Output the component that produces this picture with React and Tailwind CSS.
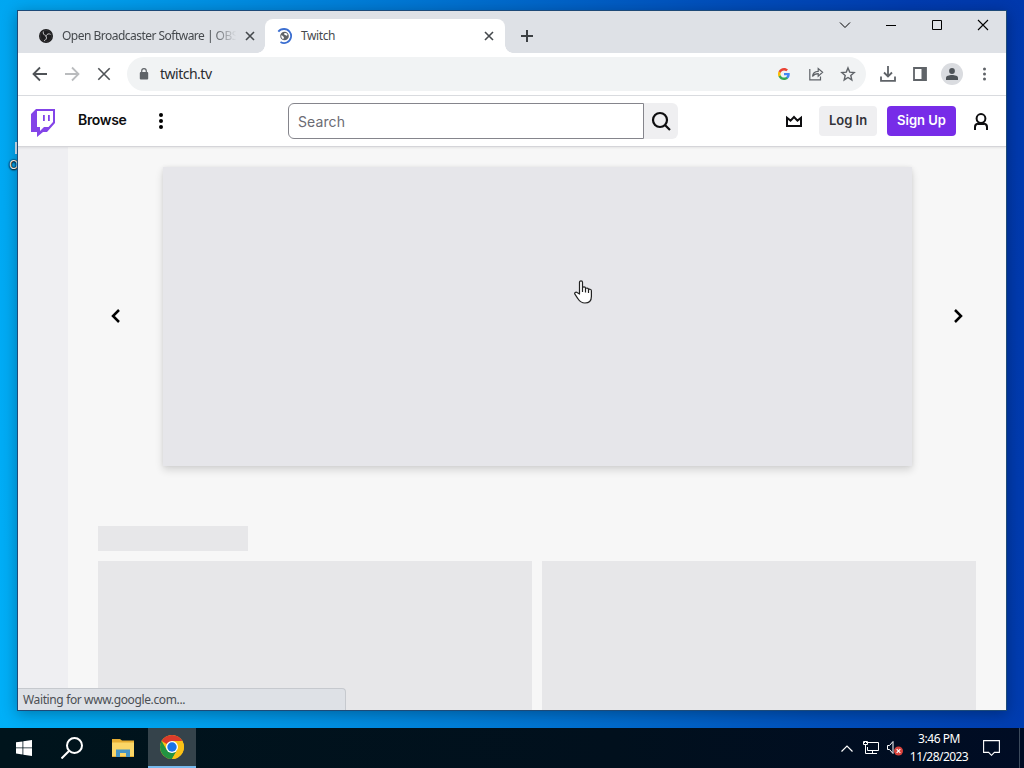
import React from 'react';

const UI_FONT = "font-['Noto_Sans','Open_Sans',sans-serif]";

const CloseIcon = ({ size = 10, className = '' }) => (
  <svg width={size} height={size} viewBox="0 0 10 10" className={className} fill="none" stroke="currentColor" strokeWidth="1.6">
    <path d="M1 1l8 8M9 1L1 9" />
  </svg>
);

const ObsIcon = () => (
  <svg width="14" height="14" viewBox="0 0 14 14">
    <circle cx="7" cy="7" r="7" fill="#1d1d1f" />
    <circle cx="7" cy="7" r="5.6" fill="none" stroke="#3c3c3e" strokeWidth=".6" />
    <path d="M4.400 2.500c-.6 2 .3 3.600 2.400 4M11.600 5.400C9.900 4.300 8 4.900 7.300 6.700M5 11.600c1.900-.4 2.900-2 2.300-4.100" fill="none" stroke="#c4c4c6" strokeWidth="1" />
    <circle cx="7" cy="7" r="1" fill="#9a9a9c" />
  </svg>
);

const LoadingIcon = () => (
  <svg width="16" height="16" viewBox="0 0 16 16" fill="none">
    <path d="M1.300 3.600C2.500 2 4.500 1 7 1a7 7 0 1 1-3.500 13" stroke="#3c6fd1" strokeWidth="1.800" />
    <circle cx="7.500" cy="8" r="4.300" fill="#5f6368" />
    <path d="M4.300 7.200c1.500-.2 1.300 1.300 2.400 1.500.6.700-.3 1.700-.2 2.500-1.500-.4-2.500-2-2.200-4zM7.300 5.200c.8-.6 2.300-.3 3 .8.300.8.200 1.200-.4 1.700-.8.200-1.100-.5-1.900-.6-.7-.4-1.100-1.100-.7-1.900z" fill="#fff" />
  </svg>
);

const TabStrip = () => (
  <div className="flex h-[42px] shrink-0 bg-[#dee1e6] text-[#45494d]">
    <div className="mt-2 flex w-[247px] items-center pl-[21px]">
      <ObsIcon />
      <span className="ml-[9px] w-[178px] whitespace-nowrap text-[12px] tracking-[-0.52px] [mask-image:linear-gradient(to_right,#000_84%,transparent_98%)]">
        Open Broadcaster Software | OBS
      </span>
      <CloseIcon className="ml-[5px]" />
    </div>
    <div className="relative mt-2 flex w-[240px] items-center rounded-t-lg bg-white pl-3">
      <span className="absolute bottom-0 -left-2 size-2 bg-[radial-gradient(circle_at_0_0,transparent_7.5px,#fff_8px)]" />
      <span className="absolute bottom-0 -right-2 size-2 bg-[radial-gradient(circle_at_100%_0,transparent_7.5px,#fff_8px)]" />
      <LoadingIcon />
      <span className="ml-2 flex-1 text-[12px] tracking-[-0.4px]">Twitch</span>
      <CloseIcon className="mr-[11px]" />
    </div>
    <svg className="mt-[19px] ml-4" width="12" height="12" viewBox="0 0 12 12" stroke="#3c4043" strokeWidth="2">
      <path d="M6 0v12M0 6h12" />
    </svg>
    <div className="ml-auto flex h-7 items-center text-black">
      <svg width="46" height="28" viewBox="0 0 46 28" fill="none" stroke="currentColor">
        <path d="M18 11.500l5 5 5-5" />
      </svg>
      <svg width="46" height="28" viewBox="0 0 46 28" fill="none" stroke="currentColor">
        <path d="M18 14.500h10" />
      </svg>
      <svg width="46" height="28" viewBox="0 0 46 28" fill="none" stroke="currentColor">
        <path d="M18.500 9.500h9v9h-9z" />
      </svg>
      <svg width="46" height="28" viewBox="0 0 46 28" fill="none" stroke="currentColor">
        <path d="M18 9l10 10M28 9L18 19" strokeWidth="1.100" />
      </svg>
    </div>
  </div>
);

const Toolbar = () => (
  <div className="flex h-[43px] shrink-0 items-center border-b border-[#dadce0] bg-white text-[#5f6368]">
    <svg className="ml-[14px]" width="16" height="16" viewBox="0 0 16 16" fill="none" stroke="#4f5357" strokeWidth="1.800">
      <path d="M15 8H2M8 1.500L1.500 8 8 14.500" />
    </svg>
    <svg className="ml-4" width="16" height="16" viewBox="0 0 16 16" fill="none" stroke="#babcbe" strokeWidth="1.800">
      <path d="M1 8h13M8 1.500L14.500 8 8 14.500" />
    </svg>
    <svg className="ml-4" width="16" height="16" viewBox="0 0 16 16" fill="none" stroke="#4f5357" strokeWidth="1.600">
      <path d="M2.300 2.300l11.400 11.400M13.700 2.300L2.300 13.700" />
    </svg>
    <div className="ml-[15px] flex h-[34px] w-[739px] items-center rounded-full bg-[#f1f3f4]">
      <svg className="ml-3" width="10" height="12" viewBox="0 0 10 12">
        <rect x=".8" y="4" width="8.400" height="7.500" rx="1" fill="#5f6368" />
        <path d="M2.700 4.500V3a2.300 2.300 0 0 1 4.600 0v1.500" fill="none" stroke="#5f6368" strokeWidth="1.200" />
      </svg>
      <span className="ml-[11px] -mt-px text-[14px] tracking-[-0.5px] text-[#2b2d30]">twitch.tv</span>
      <svg className="ml-auto" width="12" height="12" viewBox="0 0 48 48">
        <path fill="#4285F4" d="M47 24.500c0-1.600-.2-3.200-.4-4.700H24v9h12.900c-.6 3-2.300 5.500-4.800 7.200v6h7.700c4.600-4.200 7.200-10.400 7.200-17.500z" />
        <path fill="#34A853" d="M24 48c6.500 0 12-2.100 15.800-5.900l-7.700-6c-2.100 1.400-4.800 2.300-8.100 2.300-6.300 0-11.600-4.200-13.500-9.900H2.600v6.200C6.500 42.600 14.600 48 24 48z" />
        <path fill="#FBBC05" d="M10.500 28.500a14.500 14.500 0 0 1 0-9.100v-6.200H2.600a24 24 0 0 0 0 21.500z" />
        <path fill="#EA4335" d="M24 9.500c3.500 0 6.700 1.200 9.200 3.600l6.800-6.800C35.900 2.400 30.500 0 24 0 14.600 0 6.500 5.400 2.600 13.200l7.900 6.200C12.400 13.700 17.700 9.500 24 9.500z" />
      </svg>
      <svg className="ml-[18px]" width="16" height="16" viewBox="0 0 16 16" fill="none" stroke="currentColor" strokeWidth="1.200">
        <path d="M1.800 3v10.800h10.700v-3.300" />
        <path d="M4.500 10.500c.3-3.500 2.300-5.100 5.700-5.200V2.500L14.600 6.300l-4.400 3.800V7.700c-2.600 0-4.400.8-5.700 2.800z" />
      </svg>
      <svg className="ml-4 mr-[10px]" width="16" height="16" viewBox="0 0 16 16" fill="none" stroke="currentColor" strokeWidth="1.400">
        <path d="M8 1.900l1.700 4.200 4.500.4-3.400 3 1 4.400L8 11.500l-3.800 2.400 1-4.400-3.400-3 4.500-.4z" />
      </svg>
    </div>
    <svg className="ml-[14px]" width="16" height="16" viewBox="0 0 16 16" fill="none" stroke="currentColor" strokeWidth="1.800">
      <path d="M8 0v10M4 6.500l4 4 4-4M1 10.500v4.300h14v-4.300" />
    </svg>
    <svg className="ml-4" width="16" height="16" viewBox="0 0 16 16">
      <path d="M2 2h12v12H2z" fill="none" stroke="currentColor" strokeWidth="1.800" />
      <path d="M9.500 2H14v12H9.500z" fill="currentColor" />
    </svg>
    <div className="ml-[13px] flex size-[22px] items-center justify-center rounded-full bg-[#dadce0]">
      <svg width="12" height="12" viewBox="0 0 12 12" fill="#4e5358">
        <circle cx="6" cy="3" r="2.900" />
        <path d="M0 12V9.800C0 7.900 3 7 6 7s6 .9 6 2.800V12z" />
      </svg>
    </div>
    <svg className="ml-[19px]" width="4" height="14" viewBox="0 0 4 14" fill="currentColor">
      <circle cx="2.500" cy="2" r="1.500" />
      <circle cx="2.500" cy="7" r="1.500" />
      <circle cx="2.500" cy="12" r="1.500" />
    </svg>
  </div>
);

const TwitchNav = () => (
  <header className="relative z-10 flex h-[51px] shrink-0 items-center border-b border-[#d5d5d9] bg-white font-['Inter',sans-serif] text-[#0e0e10] shadow-[0_1px_2px_rgba(0,0,0,0.08)]">
    <svg className="ml-[13px] mt-1" width="24" height="28" viewBox="0 0 24 28">
      <path fill="#fff" d="M6 2h16v12l-5 5h-4l-4 4v-4H6z" />
      <path fill="#8344e8" d="M5 0L0 5v18h6v5l6-5h4l8-9V0zm17 13l-4.500 5H13l-4 4v-4H6V2h16z" />
      <path fill="#8344e8" d="M12 6h1.800v6H12zM17 6h1.800v6H17z" />
    </svg>
    <span className="ml-[23px] w-12 -mt-[3px] text-[14px] font-semibold tracking-[-0.35px]">Browse</span>
    <svg className="ml-[33px]" width="4" height="16" viewBox="0 0 4 16">
      <circle cx="2" cy="2" r="2" />
      <circle cx="2" cy="8" r="2" />
      <circle cx="2" cy="14" r="2" />
    </svg>
    <div className="ml-[125px] flex h-9">
      <div className="flex w-[356px] items-center rounded-l-[6px] border border-[#85858c] bg-white pl-[9px] text-[14px] tracking-[0.1px] text-[#6b6b73]">
        Search
      </div>
      <div className="flex w-[34px] items-center justify-center rounded-r-[6px] bg-[#efeff1]">
        <svg width="20" height="20" viewBox="0 0 20 20" fill="none" stroke="currentColor" strokeWidth="2.200">
          <circle cx="9" cy="9" r="7" />
          <path d="M14 14l5 5" />
        </svg>
      </div>
    </div>
    <svg className="ml-auto" width="18" height="12" viewBox="0 0 18 12" fill="none" stroke="currentColor" strokeWidth="2">
      <path d="M2 10.900V2.800l3.500 2.800L9 2l3.500 3.600L16 2.800v8.100z" />
    </svg>
    <button className="ml-4 h-[30px] w-[58px] rounded bg-[#efeff1] text-[13px] font-semibold text-[#323238]">Log In</button>
    <button className="ml-[10px] h-[30px] w-[69px] rounded bg-[#772ce8] text-[13px] font-semibold text-white">Sign Up</button>
    <svg className="ml-[18px] mr-[18px]" width="14" height="17" viewBox="0 0 14 17" fill="none" stroke="currentColor" strokeWidth="2">
      <circle cx="7" cy="5.500" r="4.400" />
      <path d="M1 17v-3c0-2 1-3 3-3.500L5 9.700M13 17v-3c0-2-1-3-3-3.500L9 9.700M4 11h6" />
    </svg>
  </header>
);

const Carousel = () => (
  <div className="flex items-center">
    <svg className="mx-[43px] mb-[2px]" width="9" height="14" viewBox="0 0 9 14" fill="none" stroke="#000" strokeWidth="2.500">
      <path d="M8 1L2 7l6 6" />
    </svg>
    <div className="h-[299px] w-[749px] bg-[#e6e6ea] shadow-[0_4px_8px_rgba(0,0,0,0.14),0_0_4px_rgba(0,0,0,0.06)]" />
    <svg className="ml-[42px] mb-[2px]" width="9" height="14" viewBox="0 0 9 14" fill="none" stroke="#000" strokeWidth="2.500">
      <path d="M1 1l6 6-6 6" />
    </svg>
  </div>
);

const BrowserWindow = () => (
  <div className={`absolute left-[17px] top-[10px] flex h-[701px] w-[990px] flex-col overflow-hidden border border-[#1d4a78] shadow-[0_3px_14px_rgba(0,0,0,0.3)] ${UI_FONT}`}>
    <TabStrip />
    <Toolbar />
    <TwitchNav />
    <div className="flex min-h-0 flex-1">
      <aside className="w-[50px] shrink-0 bg-[#efeff2]" />
      <main className="flex-1 overflow-hidden bg-[#f7f7f7] pt-5">
        <Carousel />
        <div className="ml-[30px] mt-[60px] h-[25px] w-[150px] bg-[#e7e7e9]" />
        <div className="ml-[30px] mt-[10px] flex gap-[10px]">
          <div className="h-[180px] w-[434px] bg-[#e7e7e9]" />
          <div className="h-[180px] w-[434px] bg-[#e7e7e9]" />
        </div>
      </main>
    </div>
    <div className="absolute bottom-0 left-0 flex h-[22px] w-[328px] items-center rounded-tr border-r border-t border-[#c6c9ce] bg-[#dee1e6] pl-[5px] text-[12px] tracking-[-0.37px] text-[#4b4f54]">
      Waiting for www.google.com...
    </div>
  </div>
);

const ChromeIcon = () => (
  <svg width="24" height="24" viewBox="0 0 24 24">
    <circle cx="12" cy="12" r="12" fill="#fbc116" />
    <path d="M12 12L1.610 6A12 12 0 0 1 22.390 6z" fill="#db3b2b" />
    <path d="M1.610 6A12 12 0 0 0 12 24l5.200-9L12 12 6.800 15z" fill="#229342" />
    <path d="M12 6h10.390A12 12 0 0 1 12 24l5.200-9z" fill="#fbc116" />
    <circle cx="12" cy="12" r="6" fill="#fff" />
    <circle cx="12" cy="12" r="4.700" fill="#1a73e8" />
  </svg>
);

const Taskbar = () => (
  <footer className={`flex h-10 items-center bg-[linear-gradient(to_right,#00141c,#01101d_60%,#000c24)] text-white ${UI_FONT}`}>
    <svg className="ml-4" width="16" height="16" viewBox="0 0 16 16" fill="currentColor">
      <path d="M0 2.300l6.500-.9v6.100H0zM7.300 1.200L16 0v7.500H7.300zM0 8.300h6.500v6.200L0 13.600zM7.300 8.300H16V16l-8.700-1.200z" />
    </svg>
    <svg className="ml-[29px]" width="22" height="22" viewBox="0 0 22 22" fill="none" stroke="currentColor" strokeWidth="2">
      <circle cx="13.500" cy="8.500" r="7.500" />
      <path d="M8 14l-7.500 7.500" />
    </svg>
    <svg className="ml-[29px]" width="22" height="18" viewBox="0 0 22 18">
      <path d="M0 0h8l2 1.500h12V18H0z" fill="#e6ad33" />
      <path d="M0 3.500h22V17H0z" fill="#fbd667" />
      <path d="M4 18V10.500h14V18h-4v-4H8v4z" fill="#4694c4" />
    </svg>
    <div className="ml-[14px] flex h-10 w-12 items-center justify-center border-b-2 border-[#76b9ed] bg-[#35434b]">
      <ChromeIcon />
    </div>
    <svg className="ml-auto" width="12" height="7" viewBox="0 0 12 7" fill="none" stroke="currentColor" strokeWidth="1.200">
      <path d="M.5 6.500L6 1l5.500 5.500" />
    </svg>
    <svg className="ml-[10px]" width="16" height="14" viewBox="0 0 16 14" fill="none" stroke="currentColor">
      <path d="M5 1.500h10.500v8H4.500V6M9.500 9.500v3M5 12.500h9" />
      <path d="M.5.500h4v3h-4zM2.500 3.500v9H5M1.500.500v1.500M3.500.500v1.500" />
    </svg>
    <svg className="ml-2" width="17" height="16" viewBox="0 0 17 16">
      <path d="M.5 5.500h2l3.500-4v12l-3.500-4h-2z" fill="none" stroke="#fff" />
      <circle cx="11.500" cy="11" r="4.500" fill="#d9433c" />
      <path d="M9.700 9.200l3.600 3.600M13.300 9.200l-3.600 3.600" stroke="#fff" strokeWidth="1.200" />
    </svg>
    <div className="ml-1 mr-px w-[62px] whitespace-nowrap text-center text-[12px] leading-[18px]">
      <div className="tracking-[-0.45px]">3:46 PM</div>
      <div className="-mx-2 tracking-[-0.55px]">11/28/2023</div>
    </div>
    <svg className="ml-[12px] mr-[19px] h-4 w-[17px]" viewBox="0 0 17 16" fill="none" stroke="currentColor" strokeWidth="1.100">
      <path d="M.6.600h15.800v11.800h-5L8.500 15.300 5.600 12.400h-5z" />
    </svg>
    <div className="mr-1 h-10 w-px bg-[#3c4a5c]" />
  </footer>
);

export default function App() {
  return (
    <div className="relative flex h-[768px] w-[1024px] flex-col justify-end overflow-hidden bg-[linear-gradient(81deg,#00b0f8_0%,#00a2ee_16%,#0074d2_48%,#0050bc_72%,#003cb0_90%,#0038ac_100%)]">
      <div className="absolute left-[15px] top-[142px] h-3 w-1 bg-[#d5e9f8]" />
      <div className="absolute left-[9px] top-[156px] font-['Noto_Sans',sans-serif] text-[12px] text-white [text-shadow:0_1px_2px_#000,0_0_2px_#000,0_0_1px_#000]">OBS</div>
      <BrowserWindow />
      <Taskbar />
      <svg className="absolute left-[574px] top-[280px]" width="19" height="24" viewBox="0 0 19 24" fill="#fff" stroke="#222" strokeWidth="1.200" strokeLinejoin="round">
        <path d="M5.500 14V2.200C5.500.3 8.500.3 8.500 2.200V8c.2-1.700 3-1.500 3 .2V9c.2-1.500 3-1.200 3 .4v.6c.4-1.300 2.900-.9 2.900.8v5.700c0 4-2.500 6.500-6.500 6.500-3.500 0-5.300-1.600-6.900-4.200L.9 14.200c-.9-1.500 1-2.700 2.200-1.700z" />
        <path d="M8.500 8v4M11.500 9v3.500M14.500 10v3" fill="none" />
      </svg>
    </div>
  );
}
